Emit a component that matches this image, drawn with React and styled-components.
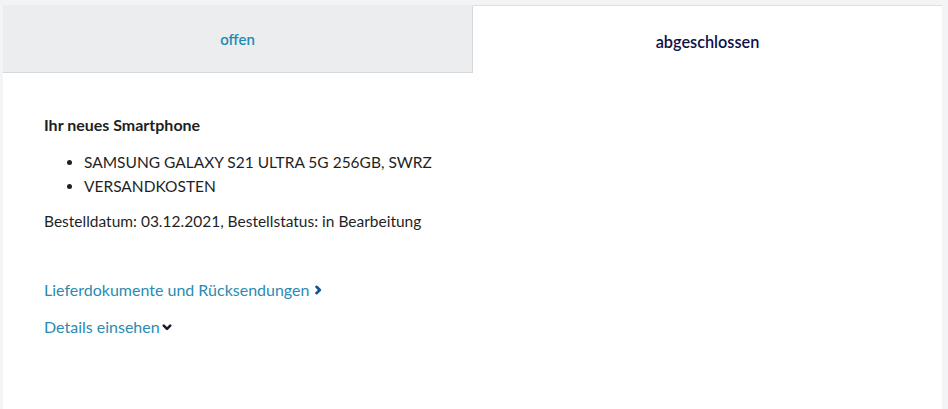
import React from "react";
import styled, { createGlobalStyle } from "styled-components";

const Global = createGlobalStyle`
  html, body { margin: 0; padding: 0; background: #f3f4f5; }
  body { font-family: Lato, "Open Sans", sans-serif; color: #1f1f24; }
`;

const Page = styled.div`
  padding: 5px 6px 0 3px;
  height: 409px;
  box-sizing: border-box;
`;

const Card = styled.div`
  background: #ffffff;
  height: 100%;
`;

const Tabs = styled.div`
  display: grid;
  grid-template-columns: 470px 1fr;
  height: 68px;
`;

const Tab = styled.div`
  display: flex;
  align-items: center;
  justify-content: center;
  box-sizing: border-box;
  font-size: ${(p) => (p.$active ? "16.3px" : "15px")};
  background: ${(p) => (p.$active ? "#ffffff" : "#ebedef")};
  color: ${(p) => (p.$active ? "#10104a" : "#1d8ab4")};
  font-weight: 600;
  border-top: 1px solid ${(p) => (p.$active ? "#dcdee0" : "transparent")};
  border-right: ${(p) => (p.$active ? "none" : "1px solid #d6d8da")};
  border-bottom: ${(p) => (p.$active ? "none" : "1px solid #d6d8da")};
  padding-top: ${(p) => (p.$active ? "3px" : "0")};
`;

const Body = styled.div`
  padding: 42px 41px 0;
  font-size: 15.5px;
`;

const Title = styled.div`
  font-weight: 700;
  font-size: 16px;
  color: #1f1f24;
  line-height: 20px;
`;

const List = styled.ul`
  margin: 15px 0 0;
  padding: 0 0 0 40px;
  line-height: 24px;
`;

const Item = styled.li`
  padding-left: 0;
`;

const Info = styled.div`
  margin-top: 13px;
  line-height: 20px;
`;

const Links = styled.div`
  margin-top: 49px;
  display: flex;
  flex-direction: column;
  gap: 17px;
  font-size: 16px;
`;

const LinkRow = styled.a`
  display: inline-flex;
  align-items: center;
  gap: ${(p) => p.$gap || "4px"};
  color: #2a8bb3;
  text-decoration: none;
  line-height: 20px;
`;

const Chevron = ({ dir, color }) => (
  <svg width="10" height="10" viewBox="0 0 10 10" fill="none" stroke={color} strokeWidth="2.6" strokeLinecap="round" strokeLinejoin="round">
    {dir === "right" ? <path d="M3.5 1.8 L6.8 5 L3.5 8.2" /> : <path d="M1.8 3.6 L5 6.8 L8.2 3.6" />}
  </svg>
);

export default function App() {
  return (
    <>
      <Global />
      <Page>
        <Card>
          <Tabs>
            <Tab>offen</Tab>
            <Tab $active>abgeschlossen</Tab>
          </Tabs>
          <Body>
            <Title>Ihr neues Smartphone</Title>
            <List>
              <Item>SAMSUNG GALAXY S21 ULTRA 5G 256GB, SWRZ</Item>
              <Item>VERSANDKOSTEN</Item>
            </List>
            <Info>Bestelldatum: 03.12.2021, Bestellstatus: in Bearbeitung</Info>
            <Links>
              <div>
                <LinkRow href="#">
                  Lieferdokumente und Rücksendungen
                  <Chevron dir="right" color="#1a4f8c" />
                </LinkRow>
              </div>
              <div>
                <LinkRow href="#" $gap="2px">
                  Details einsehen
                  <Chevron dir="down" color="#1b1b2a" />
                </LinkRow>
              </div>
            </Links>
          </Body>
        </Card>
      </Page>
    </>
  );
}
